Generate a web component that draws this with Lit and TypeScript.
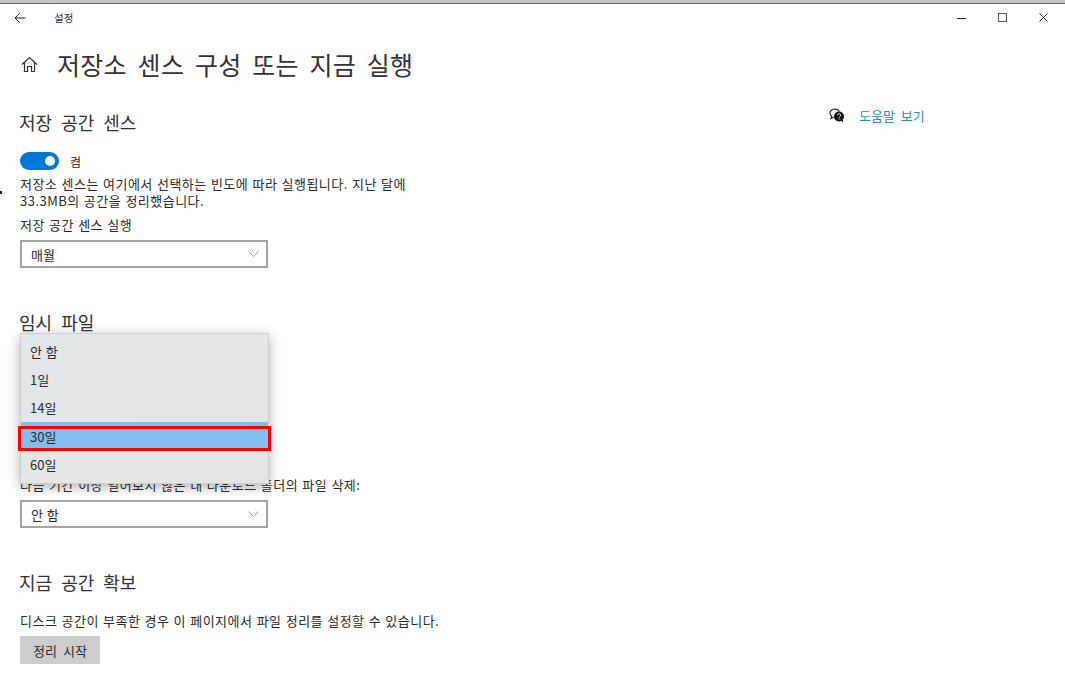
import { LitElement, html, css } from "lit";
import { customElement } from "lit/decorators.js";

const chevron = html`<svg class="chev" width="11" height="6" viewBox="0 0 11 6"><path d="M.5.5l5 5 5-5" fill="none" stroke="#999" stroke-width="1"/></svg>`;

@customElement("app-root")
export class AppRoot extends LitElement {
  static styles = css`
    :host { display: block; position: relative; width: 1065px; height: 675px; overflow: hidden; background: #fff;
      font-family: "Noto Sans CJK KR", "Noto Sans", sans-serif; color: #2a2a2a; font-size: 13px; }
    .topline { height: 4px; background: #c4c4c4; border-bottom: 1px solid #666; box-sizing: border-box; }
    .titlebar { height: 27px; display: flex; align-items: center; padding: 0 0 0 14px; }
    .titlebar .app { margin-left: 28px; font-size: 10.5px; color: #333; }
    .winbtns { margin-left: auto; display: flex; align-items: center; gap: 32px; padding-right: 17px; }
    .content { padding: 0 0 0 20px; position: relative; }
    .pagehead { display: flex; align-items: center; height: 38px; margin-top: 14px; gap: 19px; }
    .home { margin-left: 1px; }
    h1 { margin: 0; font-size: 25px; font-weight: 400; line-height: 38px; color: #333; letter-spacing: .3px; word-spacing: 4.800px; }
    h2 { margin: 0; font-size: 18px; font-weight: 400; line-height: 26px; color: #333; margin-left: -1px; word-spacing: 5px; }
    .s1 { margin-top: 26px; }
    .toggle-row { display: flex; align-items: center; gap: 11px; margin-top: 17px; height: 18px; font-size: 12px; }
    .toggle { width: 39px; height: 18px; border-radius: 9px; background: #0078d7; position: relative; flex: none; }
    .toggle::after { content: ""; position: absolute; right: 4px; top: 4px; width: 10px; height: 10px; border-radius: 50%; background: #fff; }
    .p { line-height: 17px; letter-spacing: .48px; word-spacing: .8px; }
    .desc { margin-top: 5px; width: 395px; }
    .label { margin-top: 7px; line-height: 18px; }
    .select { margin-top: 6px; width: 248px; height: 28px; box-sizing: border-box; border: 2px solid #a3a3a3; display: flex; align-items: center; justify-content: space-between; padding: 0 7px 0 9px; background: #fff; font-size: 13px; word-spacing: 1px; }
    .s2 { margin-top: 41px; }
    .s3 { margin-top: 41px; }
    .hidden-label { padding-top: 141px; line-height: 18px; }
    .free { margin-top: 17px; line-height: 18px; }
    .btn { margin-top: 6px; width: 80px; height: 28px; background: #ccc; display: flex; align-items: center; justify-content: center; font-size: 13px; word-spacing: 3px; }
    .help { position: absolute; left: 829px; top: 106px; display: flex; align-items: center; gap: 14px; color: #2b8ad8; font-size: 13px; letter-spacing: .1px; word-spacing: 2.500px; }
    .popup { position: absolute; left: 20px; top: 333px; width: 249px; height: 151px; box-sizing: border-box; padding: 3px 0;
      background: linear-gradient(135deg, #e1e6ea 0%, #e6e6e6 40%, #e4e4e4 100%); border: 1px solid #cfcfcf;
      box-shadow: 0 3px 12px rgba(0,0,0,.3); display: flex; flex-direction: column; font-size: 13px; word-spacing: 1px; }
    .opt { height: 28.300px; display: flex; align-items: center; padding-left: 9px; color: #2a2a2a; flex: none; }
    .opt.sel { background: #82bdef; position: relative; }
    .opt.sel::after { content: ""; position: absolute; left: -3px; right: -3px; top: 4px; bottom: -1px; border: 3px solid #f00; box-sizing: border-box; }
    .speck { position: absolute; left: 0; top: 191px; width: 2px; height: 3px; background: #222; }
  `;

  render() {
    return html`
      <div class="topline"></div>
      <div class="titlebar">
        <svg width="12" height="12" viewBox="0 0 12 12"><path d="M11.500 6H1M5.500 1.500L1 6l4.500 4.500" fill="none" stroke="#222" stroke-width="1"/></svg>
        <span class="app">설정</span>
        <div class="winbtns">
          <svg width="9" height="9" viewBox="0 0 9 9"><path d="M0 5.500h9" stroke="#222"/></svg>
          <svg width="9" height="9" viewBox="0 0 9 9"><rect x=".5" y=".5" width="8" height="8" fill="none" stroke="#555"/></svg>
          <svg width="9" height="9" viewBox="0 0 9 9"><path d="M.5.5l8 8M8.500.5l-8 8" stroke="#333"/></svg>
        </div>
      </div>
      <div class="content">
        <div class="pagehead">
          <svg class="home" width="17" height="17" viewBox="0 0 17 17"><path d="M1 8.500L8.500 1.500 16 8.500M3.500 6.500V15.500H6.500V10.500H10.500V15.500H13.500V6.500" fill="none" stroke="#333" stroke-width="1.200"/></svg>
          <h1>저장소 센스 구성 또는 지금 실행</h1>
        </div>
        <section class="s1">
          <h2>저장 공간 센스</h2>
          <div class="toggle-row"><span class="toggle"></span><span>켬</span></div>
          <div class="p desc">저장소 센스는 여기에서 선택하는 빈도에 따라 실행됩니다. 지난 달에 33.3MB의 공간을 정리했습니다.</div>
          <div class="p label">저장 공간 센스 실행</div>
          <div class="select"><span>매월</span>${chevron}</div>
        </section>
        <section class="s2">
          <h2>임시 파일</h2>
          <div class="p hidden-label">다음 기간 이상 열어보지 않은 내 다운로드 폴더의 파일 삭제:</div>
          <div class="select"><span>안 함</span>${chevron}</div>
        </section>
        <section class="s3">
          <h2>지금 공간 확보</h2>
          <div class="p free">디스크 공간이 부족한 경우 이 페이지에서 파일 정리를 설정할 수 있습니다.</div>
          <div class="btn">정리 시작</div>
        </section>
      </div>
      <div class="help">
        <svg width="16" height="15" viewBox="0 0 16 15">
          <path d="M6 1C3 1 1 2.800 1 5c0 1.200.6 2.300 1.600 3L2 10.500 4.700 9" fill="none" stroke="#222" stroke-width="1.200"/>
          <path d="M6 1.200c2.200 0 3.800 1 4.500 2.300" fill="none" stroke="#222" stroke-width="1.200"/>
          <circle cx="10" cy="8.500" r="5" fill="#111"/><path d="M12 12.500l2 2v-4z" fill="#111"/>
          <path d="M8.500 7.200a1.500 1.500 0 1 1 2.200 1.400c-.5.300-.7.500-.7 1M10 10.500v1" fill="none" stroke="#fff" stroke-width="1"/>
        </svg>
        <span>도움말 보기</span>
      </div>
      <div class="popup">
        <div class="opt">안 함</div>
        <div class="opt">1일</div>
        <div class="opt">14일</div>
        <div class="opt sel">30일</div>
        <div class="opt">60일</div>
      </div>
      <div class="speck"></div>
    `;
  }
}
